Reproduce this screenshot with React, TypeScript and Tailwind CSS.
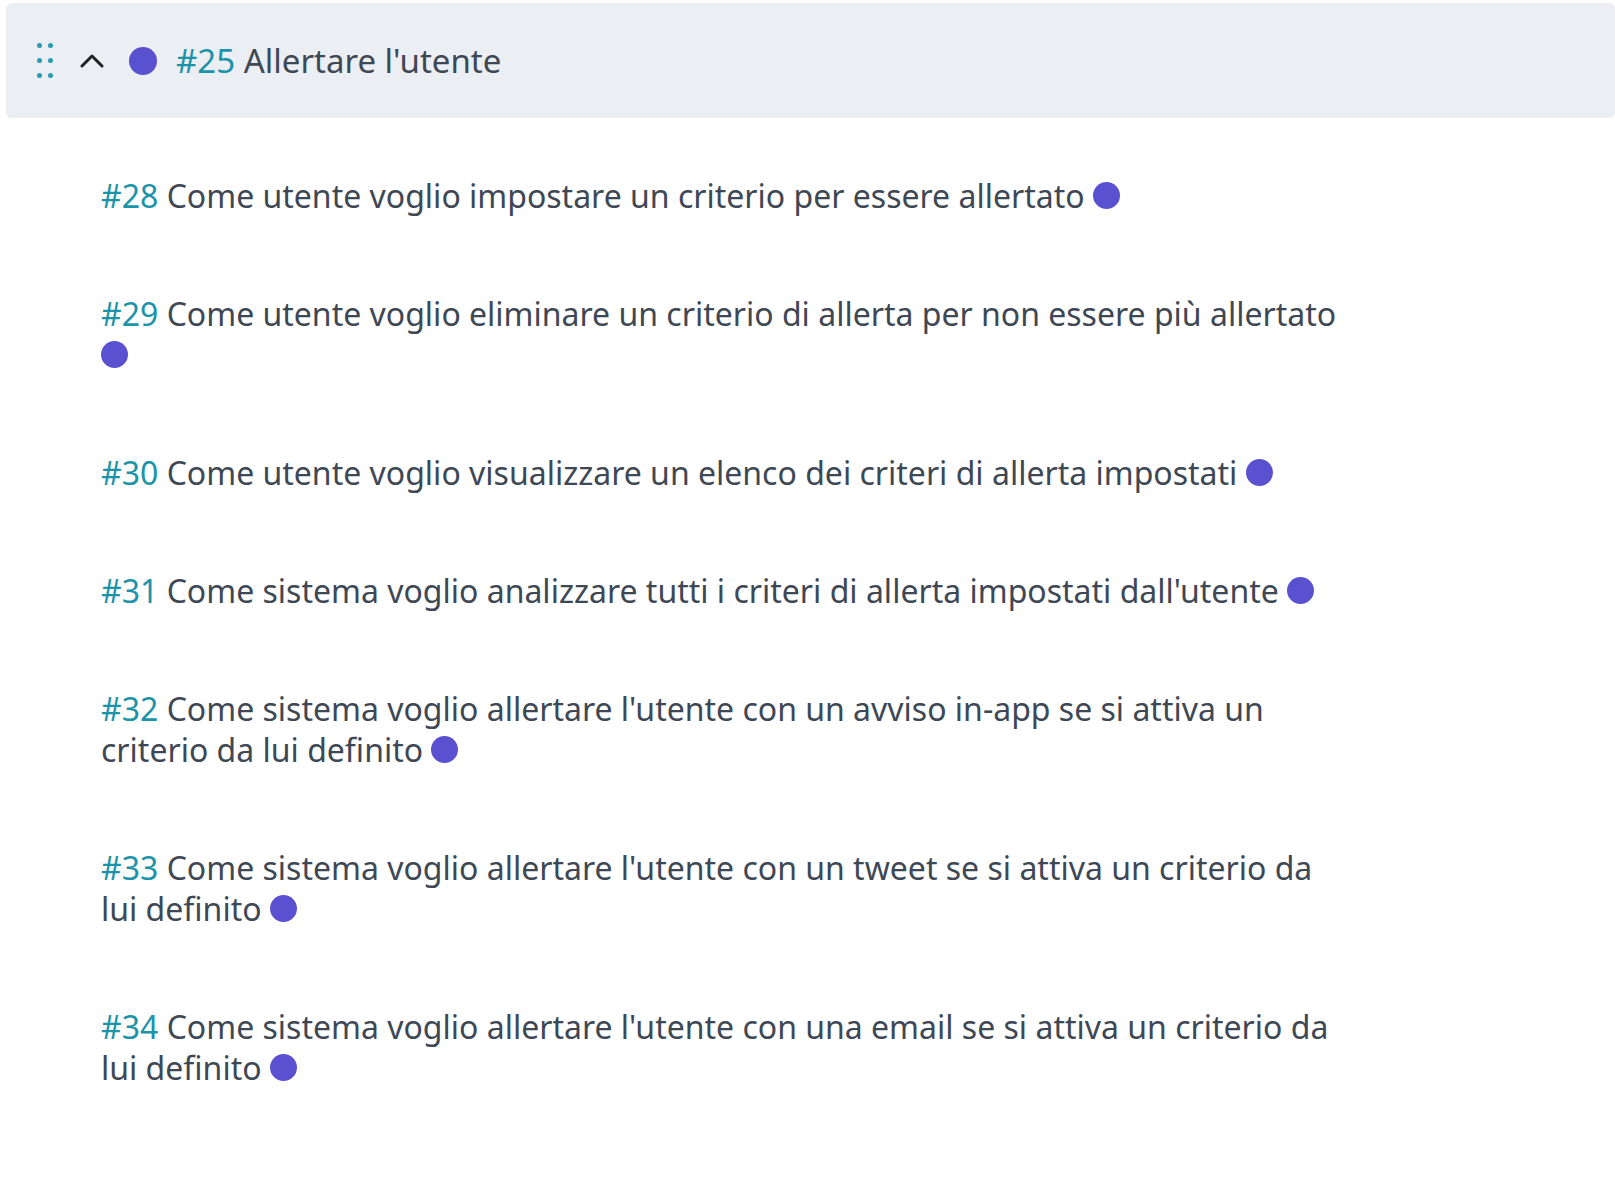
import { ReactNode } from 'react';

type Story = { id: number; title: string };

const stories: Story[] = [
	{ id: 28, title: 'Come utente voglio impostare un criterio per essere allertato' },
	{ id: 29, title: 'Come utente voglio eliminare un criterio di allerta per non essere più allertato' },
	{ id: 30, title: 'Come utente voglio visualizzare un elenco dei criteri di allerta impostati' },
	{ id: 31, title: "Come sistema voglio analizzare tutti i criteri di allerta impostati dall'utente" },
	{ id: 32, title: "Come sistema voglio allertare l'utente con un avviso in-app se si attiva un criterio da lui definito" },
	{ id: 33, title: "Come sistema voglio allertare l'utente con un tweet se si attiva un criterio da lui definito" },
	{ id: 34, title: "Come sistema voglio allertare l'utente con una email se si attiva un criterio da lui definito" },
];

const Dot = ({ className = '' }: { className?: string }) => (
	<span className={`inline-block rounded-full bg-[#5a51d1] ${className}`} />
);

const DragHandle = () => (
	<div className="grid grid-cols-2 gap-x-[6px] gap-y-[10px]">
		{Array(6)
			.fill(null)
			.map((_, i) => (
				<span key={i} className="block w-[5px] h-[5px] rounded-full bg-[#2a9cb0]" />
			))}
	</div>
);

const ChevronUp = () => (
	<svg width="24" height="17" viewBox="0 0 24 17" fill="none">
		<polyline
			points="2,14 12,4 22,14"
			stroke="#222"
			strokeWidth="3"
			strokeLinecap="round"
			strokeLinejoin="round"
		/>
	</svg>
);

function Row({ story }: { story: Story }): ReactNode {
	return (
		<p className="leading-[41px] text-[#3e4855]">
			<span className="text-[#1b93a8]">#{story.id}</span> {story.title}{' '}
			<Dot className="w-[27px] h-[27px] align-[-1px]" />
		</p>
	);
}

export default function App() {
	return (
		<div
			className="min-h-[1179px] w-full bg-white pt-[3px] pl-[6px] text-[32px]"
			style={{ fontFamily: '"Noto Sans", "Open Sans", sans-serif' }}
		>
			<div className="flex items-center h-[115px] rounded-md bg-[#ebeef3] pl-[31px]">
				<DragHandle />
				<div className="ml-[27px]">
					<ChevronUp />
				</div>
				<Dot className="w-[28px] h-[28px] ml-[25px]" />
				<span className="ml-[19px] text-[33px] text-[#3e4855]">
					<span className="text-[#1b93a8]">#25</span> Allertare l'utente
				</span>
			</div>
			<div className="pl-[95px] pt-[57px] w-[1348px] flex flex-col gap-[77px]">
				{stories.map((s) => (
					<Row key={s.id} story={s} />
				))}
			</div>
		</div>
	);
}
